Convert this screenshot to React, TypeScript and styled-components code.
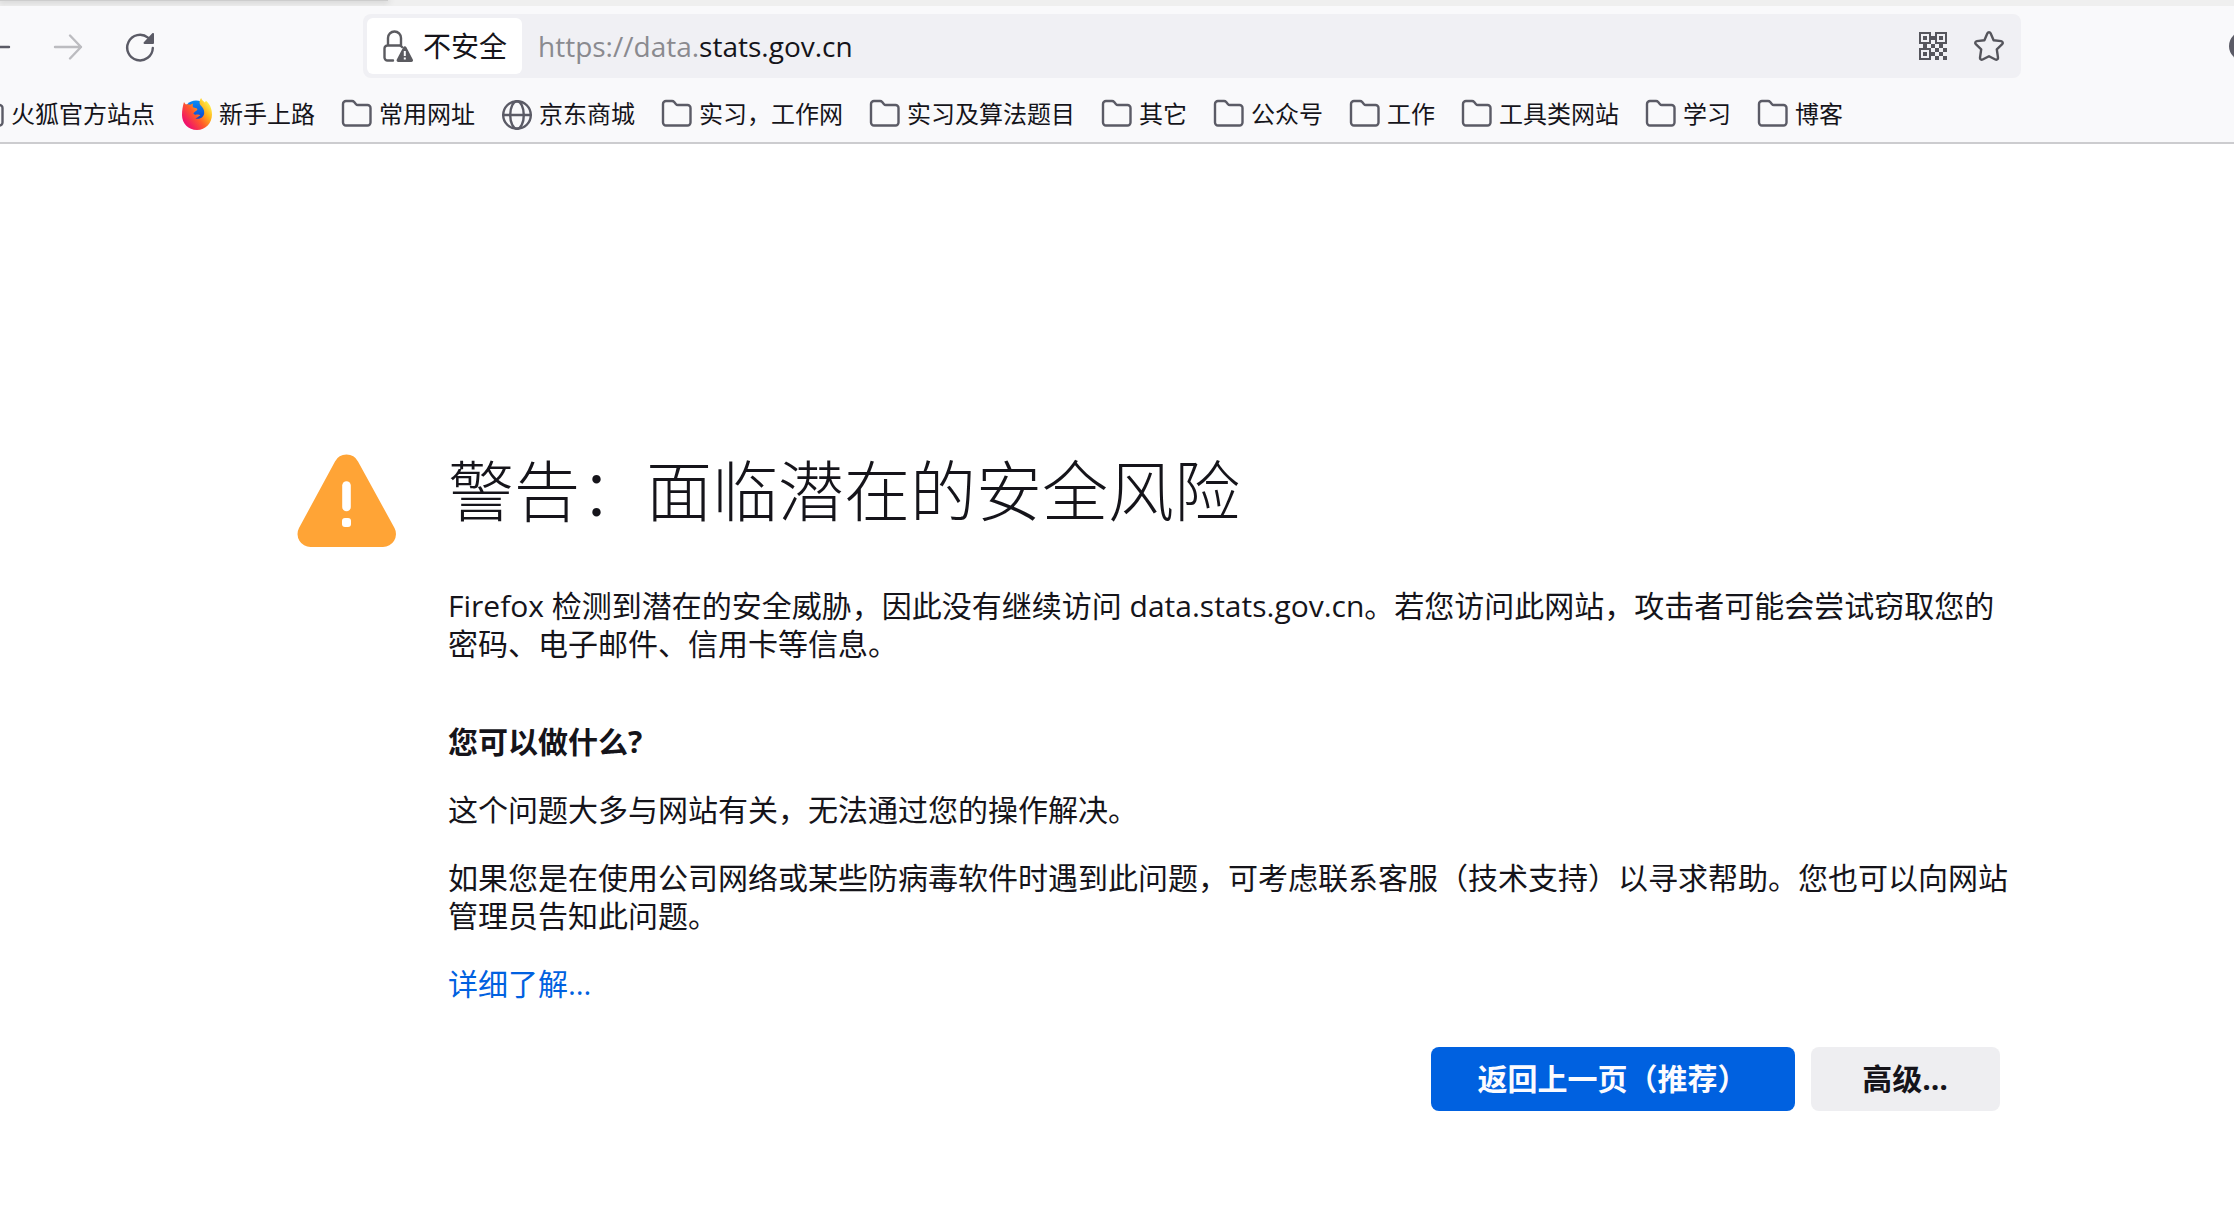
import React from "react";
import styled, { createGlobalStyle, css } from "styled-components";

const Global = createGlobalStyle`
  *, *::before, *::after { box-sizing: border-box; }
  html { background: #fff; }
  body {
    margin: 0;
    overflow-x: hidden;
    color: #15141a;
    font-family: "Open Sans", "Noto Sans CJK SC", sans-serif;
    font-size: 30px;
    line-height: 38px;
  }
`;

const Chrome = styled.header`
  background: #f9f9fb;
  border-bottom: 2px solid #cccccf;
  overflow: hidden;
`;

const TabStrip = styled.div`
  display: flex;
  height: 6px;
  overflow: hidden;
  background: #efefef;
`;

const ActiveTabEdge = styled.div`
  width: 388px;
  height: 1px;
  background: #cdcdcd;
  box-shadow: 0 0 6px 1px #bdbdbd;
`;

const NavBar = styled.nav`
  display: flex;
  align-items: center;
  padding: 8px 0;
`;

const NavButtons = styled.div`
  display: flex;
  flex: none;
  align-items: center;
  gap: 40px;
  width: 363px;
  margin-left: -20px;
  margin-right: 20px;
  padding-top: 2px;
`;

const IconButton = styled.button<{ $color?: string }>`
  display: flex;
  flex: none;
  align-items: center;
  justify-content: center;
  width: 32px;
  height: 32px;
  padding: 0;
  border: 0;
  background: none;
  color: ${(p) => p.$color ?? "#5b5b66"};
  cursor: pointer;
`;

const UrlBar = styled.div`
  display: flex;
  flex: 1;
  align-items: center;
  height: 64px;
  padding: 4px 16px 4px 4px;
  border-radius: 8px;
  background: #f0f0f4;
`;

const IdentityButton = styled.button`
  display: flex;
  flex: none;
  align-items: center;
  gap: 9px;
  height: 56px;
  padding: 0 15px;
  border: 0;
  border-radius: 6px;
  background: #fff;
  color: #15141a;
  font: inherit;
  font-size: 28px;
  line-height: 32px;
  white-space: nowrap;
  cursor: pointer;
`;

const Address = styled.p`
  flex: 1;
  margin: 0;
  padding-left: 16px;
  font-size: 28px;
  line-height: 36px;
`;

const Dim = styled.span`
  color: #8a8a8f;
`;

const UrlActions = styled.div`
  display: flex;
  gap: 24px;
`;

const RightTools = styled.div`
  display: flex;
  flex: none;
  justify-content: flex-end;
  width: 213px;
  margin-right: -26px;
  margin-left: 26px;
`;

const Bookmarks = styled.ul`
  display: flex;
  align-items: center;
  gap: 26px;
  height: 56px;
  margin: 0 0 0 -27px;
  padding: 0;
  list-style: none;
`;

const Bookmark = styled.a`
  display: flex;
  align-items: center;
  gap: 6px;
  color: #15141a;
  font-size: 24px;
  line-height: 32px;
  text-decoration: none;
  white-space: nowrap;
`;

const Page = styled.main`
  display: flex;
  gap: 52px;
  padding: 304px 10% 60px 296px;
`;

const WarningMark = styled.svg`
  flex: none;
  width: 100px;
  height: 100px;
`;

const Content = styled.section`
  flex: 0 1 1563px;
  min-width: 0;
`;

const Title = styled.h1`
  margin: 0 0 55px;
  font-size: 66px;
  font-weight: 300;
  line-height: 84px;
`;

const Text = styled.p<{ $spaced?: boolean }>`
  margin: 0 0 ${(p) => (p.$spaced ? 60 : 30)}px;
`;

const Subtitle = styled.h2`
  margin: 0 0 30px;
  font-size: 30px;
  font-weight: 700;
  line-height: 38px;
`;

const Link = styled.a`
  color: #0061e0;
  text-decoration: none;
`;

const Buttons = styled.div`
  display: flex;
  justify-content: flex-end;
  gap: 16px;
  padding: 14px 11px 0 0;
`;

const Button = styled.button<{ $primary?: boolean }>`
  min-width: 189px;
  height: 64px;
  padding: 0 47px;
  border: 0;
  border-radius: 8px;
  background: #eeeef1;
  color: #15141a;
  font: inherit;
  font-weight: 700;
  cursor: pointer;
  ${(p) =>
    p.$primary &&
    css`
      background: #0061e0;
      color: #fbfbfe;
    `}
`;

const stroke = { fill: "none", stroke: "currentColor", strokeLinecap: "round", strokeLinejoin: "round" } as const;

const Arrow = ({ back }: { back?: boolean }) => (
  <svg width="32" height="32" viewBox="0 0 32 32" aria-hidden="true" {...stroke} strokeWidth={2.4}>
    {back ? <path d="M29 16H3M14 4.500 3 16l11 11.500" /> : <path d="M3 16h26M18 4.500 29 16 18 27.500" />}
  </svg>
);

const Reload = () => (
  <svg width="32" height="32" viewBox="0 0 32 32" aria-hidden="true">
    <path {...stroke} strokeWidth={2.4} d="M24 6.600A12.800 12.800 0 1 0 28.800 17" />
    <path fill="currentColor" d="M30 3v9a1 1 0 0 1-1 1h-8.500c-.9 0-1.300-1-.7-1.700l8.500-9c.7-.7 1.700-.3 1.700.7z" />
  </svg>
);

const Lock = () => (
  <svg width="32" height="32" viewBox="0 0 32 32" aria-hidden="true" color="#5b5b60">
    <path {...stroke} strokeWidth={2.4} d="M11 30.500H5.500a3 3 0 0 1-3-3V18.500a3 3 0 0 1 3-3H17a3 3 0 0 1 3 1.500M6 15V8a6.500 6.500 0 0 1 13 0v7" />
    <path fill="currentColor" d="M21.200 17.300a1.800 1.800 0 0 1 3.200 0l6.400 12.200a1.700 1.700 0 0 1-1.500 2.500H16.300a1.700 1.700 0 0 1-1.500-2.500z" />
    <path stroke="#fff" strokeWidth="2" d="M22.800 21v5M22.800 27.600v2" />
  </svg>
);

const Folder = () => (
  <svg width="32" height="32" viewBox="0 0 32 32" aria-hidden="true" color="#5b5b66">
    <path
      {...stroke}
      strokeWidth={2.4}
      d="M5 3h6c1 0 1.600.3 2.200 1l1.800 2.200c.5.600 1 .8 1.800.8H26.500a3 3 0 0 1 3 3v14.500a3 3 0 0 1-3 3H5a3 3 0 0 1-3-3V6a3 3 0 0 1 3-3z"
    />
  </svg>
);

const Globe = () => (
  <svg width="32" height="32" viewBox="0 0 32 32" aria-hidden="true" color="#5b5b66" {...stroke} strokeWidth={2.4}>
    <circle cx="16" cy="17" r="13.800" />
    <ellipse cx="16" cy="17" rx="6.800" ry="13.800" />
    <path d="M2.200 17h27.600" />
  </svg>
);

const FirefoxLogo = () => (
  <svg width="32" height="32" viewBox="0 0 32 32" aria-hidden="true">
    <defs>
      <linearGradient id="foxBody" x1="0.9" y1="0.15" x2="0.15" y2="0.8">
        <stop offset="0" stopColor="#fff44f" />
        <stop offset="0.3" stopColor="#ffb01a" />
        <stop offset="0.6" stopColor="#ff5a2a" />
        <stop offset="1" stopColor="#f0136b" />
      </linearGradient>
      <linearGradient id="foxGlobe" x1="0.5" y1="0" x2="0.5" y2="1">
        <stop offset="0" stopColor="#0a8cf5" />
        <stop offset="0.6" stopColor="#0b54d8" />
        <stop offset="1" stopColor="#3a1f8f" />
      </linearGradient>
    </defs>
    <circle cx="15" cy="15" r="12.500" fill="url(#foxGlobe)" />
    <path
      fill="url(#foxBody)"
      d="M3 4c.6 1.200 1.200 2 2 2.600 1.400-.5 3-.3 4.200.2L12 5.500c-.4 1.400-.4 2.700 0 3.700l4 1.300c1 .8 0 2-1.800 2.900l-1.800 1.800c.8 1.300 2 1.600 3.300 1.400 1.600-.2 2.800-.2 3.700.8-2 .5-2.600 2.600-5 2.800 4 1.600 8.300-.8 8.800-5 .4-3.600-1.700-6-3.400-7.700-2-2-1.300-5.300.4-7.500.2 1.600 1.800 2.700 3.700 4.500l1-1.800C29 6 31 11 31 16.500 31 25 24.600 32 16 32S1 25.500 1 17C1 12 1.800 8 3 4z"
    />
  </svg>
);

const QrCode = () => (
  <svg width="32" height="32" viewBox="0 0 32 32" aria-hidden="true" color="#55555c">
    <path fill="none" stroke="currentColor" strokeWidth="2" d="M3 3h10v10H3zM19 3h10v10H19zM3 19h10v10H3z" />
    <path
      fill="currentColor"
      d="M6 6h4v4H6zM22 6h4v4h-4zM6 22h4v4H6zM14 6h4v4h-4zM6 14h4v4H6zM14 14h4v4h-4zM22 14h4v4h-4zM18 18h4v4h-4zM26 18h4v4h-4zM14 22h4v4h-4zM22 22h4v4h-4zM18 26h4v4h-4zM26 26h4v4h-4z"
    />
  </svg>
);

const Star = () => (
  <svg width="32" height="32" viewBox="0 0 32 32" aria-hidden="true" color="#55555c">
    <path
      {...stroke}
      strokeWidth={2.4}
      d="M14.400 3.300a1.800 1.800 0 0 1 3.200 0l3 7 7.600.8a1.800 1.800 0 0 1 1 3.100l-5.400 5.100 1.200 8.300a1.800 1.800 0 0 1-2.600 1.900L16 26.200l-6.400 3.300a1.800 1.800 0 0 1-2.600-1.900l1.200-8.300-5.400-5.100a1.800 1.800 0 0 1 1-3.100l7.600-.8z"
    />
  </svg>
);

const Account = () => (
  <svg width="32" height="32" viewBox="0 0 32 32" aria-hidden="true">
    <circle cx="16" cy="16" r="15" fill="currentColor" />
  </svg>
);

const bookmarks: { name: string; icon: () => React.JSX.Element }[] = [
  { name: "火狐官方站点", icon: Folder },
  { name: "新手上路", icon: FirefoxLogo },
  { name: "常用网址", icon: Folder },
  { name: "京东商城", icon: Globe },
  { name: "实习，工作网", icon: Folder },
  { name: "实习及算法题目", icon: Folder },
  { name: "其它", icon: Folder },
  { name: "公众号", icon: Folder },
  { name: "工作", icon: Folder },
  { name: "工具类网站", icon: Folder },
  { name: "学习", icon: Folder },
  { name: "博客", icon: Folder },
];

export default function App() {
  return (
    <>
      <Global />
      <Chrome>
        <TabStrip>
          <ActiveTabEdge />
        </TabStrip>
        <NavBar>
          <NavButtons>
            <IconButton aria-label="后退"><Arrow back /></IconButton>
            <IconButton aria-label="前进" $color="#bcbcc0"><Arrow /></IconButton>
            <IconButton aria-label="刷新"><Reload /></IconButton>
          </NavButtons>
          <UrlBar>
            <IdentityButton><Lock />不安全</IdentityButton>
            <Address><Dim>https://data.</Dim>stats.gov.cn</Address>
            <UrlActions>
              <IconButton aria-label="二维码"><QrCode /></IconButton>
              <IconButton aria-label="收藏"><Star /></IconButton>
            </UrlActions>
          </UrlBar>
          <RightTools>
            <IconButton aria-label="账户"><Account /></IconButton>
          </RightTools>
        </NavBar>
        <Bookmarks>
          {bookmarks.map(({ name, icon: Icon }) => (
            <li key={name}>
              <Bookmark href="#"><Icon />{name}</Bookmark>
            </li>
          ))}
        </Bookmarks>
      </Chrome>
      <Page>
        <WarningMark viewBox="-1 -6 100 100" aria-hidden="true">
          <path fill="#ffa436" d="M38 7.500a13 13 0 0 1 23 0L97.500 74A13 13 0 0 1 86 93H13.500A13 13 0 0 1 2 74z" />
          <path stroke="#fff" strokeWidth="8.600" strokeLinecap="round" d="M49.500 31.500v21.500" />
          <rect x="45" y="64" width="9" height="9" rx="3" fill="#fff" />
        </WarningMark>
        <Content>
          <Title>警告：面临潜在的安全风险</Title>
          <Text $spaced>
            Firefox 检测到潜在的安全威胁，因此没有继续访问 data.stats.gov.cn。若您访问此网站，攻击者可能会尝试窃取您的密码、电子邮件、信用卡等信息。
          </Text>
          <Subtitle>您可以做什么?</Subtitle>
          <Text>这个问题大多与网站有关，无法通过您的操作解决。</Text>
          <Text>
            如果您是在使用公司网络或某些防病毒软件时遇到此问题，可考虑联系客服（技术支持）以寻求帮助。您也可以向网站管理员告知此问题。
          </Text>
          <Text><Link href="#">详细了解…</Link></Text>
          <Buttons>
            <Button $primary>返回上一页（推荐）</Button>
            <Button>高级…</Button>
          </Buttons>
        </Content>
      </Page>
    </>
  );
}
